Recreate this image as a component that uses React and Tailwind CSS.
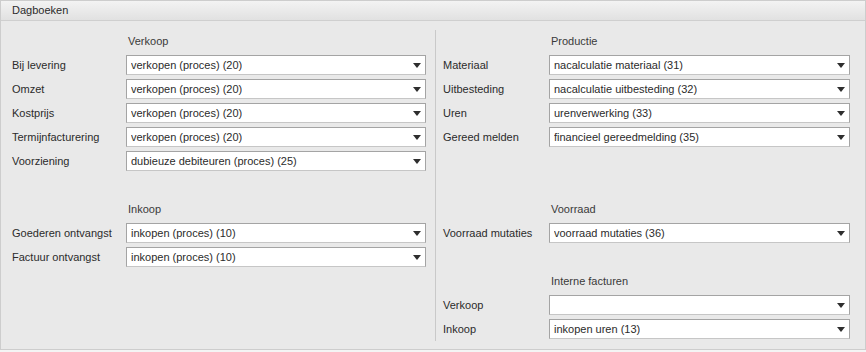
const left = [
  { title: 'Verkoop' },
  { label: 'Bij levering', value: 'verkopen (proces) (20)' },
  { label: 'Omzet', value: 'verkopen (proces) (20)' },
  { label: 'Kostprijs', value: 'verkopen (proces) (20)' },
  { label: 'Termijnfacturering', value: 'verkopen (proces) (20)' },
  { label: 'Voorziening', value: 'dubieuze debiteuren (proces) (25)' },
  { spacer: true },
  { title: 'Inkoop' },
  { label: 'Goederen ontvangst', value: 'inkopen (proces) (10)' },
  { label: 'Factuur ontvangst', value: 'inkopen (proces) (10)' },
]

const right = [
  { title: 'Productie' },
  { label: 'Materiaal', value: 'nacalculatie materiaal (31)' },
  { label: 'Uitbesteding', value: 'nacalculatie uitbesteding (32)' },
  { label: 'Uren', value: 'urenverwerking (33)' },
  { label: 'Gereed melden', value: 'financieel gereedmelding (35)' },
  { spacer: true },
  { spacer: true },
  { title: 'Voorraad' },
  { label: 'Voorraad mutaties', value: 'voorraad mutaties (36)' },
  { spacer: true },
  { title: 'Interne facturen' },
  { label: 'Verkoop', value: '' },
  { label: 'Inkoop', value: 'inkopen uren (13)' },
]

function Select({ value, width }) {
  return (
    <div
      className={`flex h-[20px] items-center justify-between border border-[#a4a4a4] border-b-[#c6c6c6] bg-white pl-[4px] pr-[4px] ${width}`}
    >
      <span className="truncate text-[#2b2b2b]">{value}</span>
      <span className="h-0 w-0 border-x-[4px] border-t-[5px] border-x-transparent border-t-[#2e2e2e]" />
    </div>
  )
}

function Column({ rows, labelWidth, selectWidth, className }) {
  return (
    <div className={`flex flex-col ${className}`}>
      {rows.map((row, i) => {
        if (row.spacer) return <div key={i} className="h-[24px]" />
        if (row.title)
          return (
            <div key={i} className="flex h-[24px] items-center">
              <div className={labelWidth} />
              <span className="pl-[2px] text-[#3a3a3a]">{row.title}</span>
            </div>
          )
        return (
          <div key={i} className="flex h-[24px] items-center">
            <span className={`text-[#2b2b2b] ${labelWidth}`}>{row.label}</span>
            <Select value={row.value} width={selectWidth} />
          </div>
        )
      })}
    </div>
  )
}

export default function App() {
  return (
    <div
      className="h-[352px] w-[866px] bg-[#f4f4f4] text-[11px]"
      style={{ fontFamily: '"Liberation Sans", Arial, sans-serif' }}
    >
      <div className="h-[350px] border border-[#cdcdcd] bg-[#e9e9e9]">
        <div className="flex h-[20px] items-center border-b border-[#cfcfcf] bg-gradient-to-b from-[#f3f3f3] to-[#e1e1e1] pl-[11px] text-[#2b2b2b]">
          Dagboeken
        </div>
        <div className="flex pt-[8px]">
          <Column
            rows={left}
            labelWidth="w-[114px] shrink-0"
            selectWidth="w-[300px]"
            className="w-[434px] pl-[11px]"
          />
          <div className="mt-[1px] h-[311px] w-px bg-[#c9c9c9]" />
          <Column
            rows={right}
            labelWidth="w-[106px] shrink-0"
            selectWidth="w-[301px]"
            className="pl-[7px]"
          />
        </div>
      </div>
    </div>
  )
}
